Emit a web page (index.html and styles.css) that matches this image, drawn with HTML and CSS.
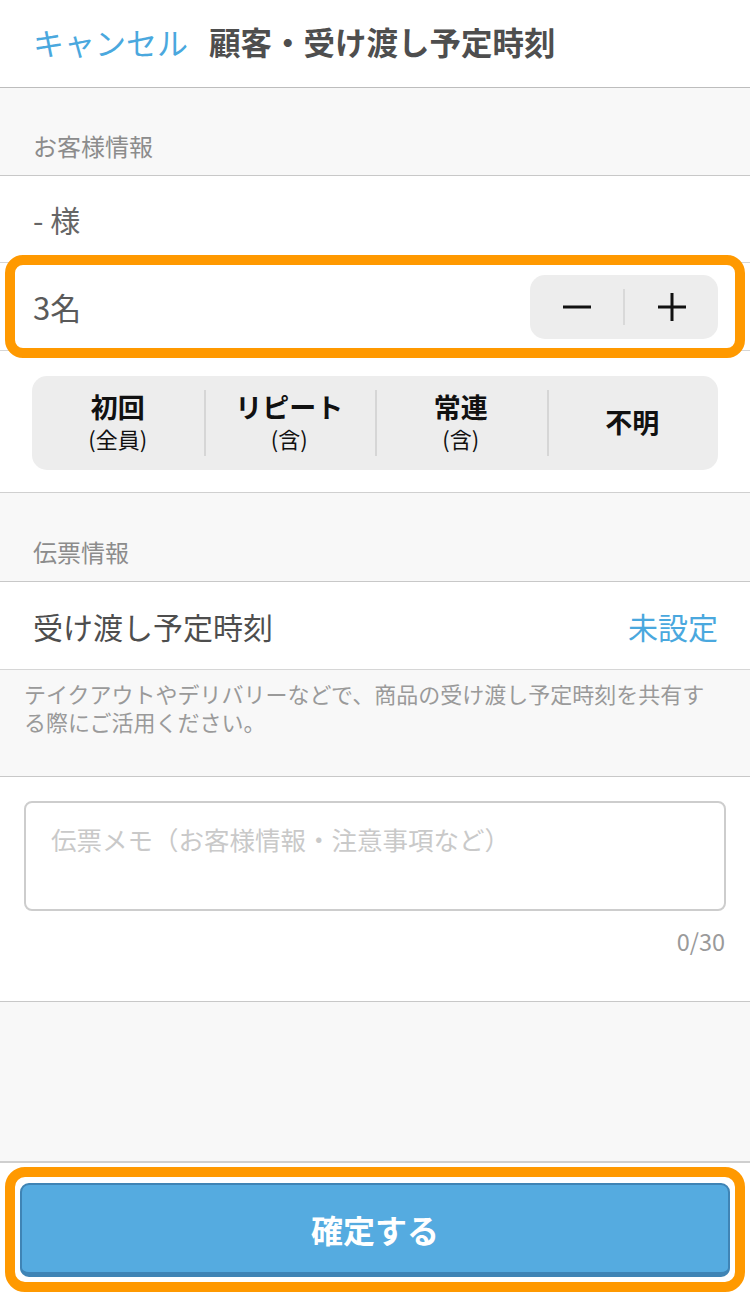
FILE: index.html
```html
<!DOCTYPE html>
<html lang="ja">
<head>
<meta charset="utf-8">
<link rel="stylesheet" href="styles.css">
</head>
<body>
<div class="page">
  <header class="topbar">
    <span class="cancel">キャンセル</span>
    <span class="title">顧客・受け渡し予定時刻</span>
  </header>

  <div class="sec-head"><span>お客様情報</span></div>

  <div class="row row-name"><span class="name">- 様</span></div>

  <div class="row count-row">
    <span class="count">3名</span>
    <div class="stepper">
      <div class="step-btn">
        <svg width="30" height="30" viewBox="0 0 30 30"><path d="M1 15H29" stroke="#111" stroke-width="3"/></svg>
      </div>
      <div class="step-div"></div>
      <div class="step-btn">
        <svg width="30" height="30" viewBox="0 0 30 30"><path d="M1 15H29M15 1V29" stroke="#111" stroke-width="3"/></svg>
      </div>
    </div>
    <div class="hl hl-count"></div>
  </div>

  <div class="seg-wrap">
    <div class="seg">
      <div class="seg-item"><span class="seg-main">初回</span><span class="seg-sub">(全員)</span></div>
      <div class="seg-item"><span class="seg-main">リピート</span><span class="seg-sub">(含)</span></div>
      <div class="seg-item"><span class="seg-main">常連</span><span class="seg-sub">(含)</span></div>
      <div class="seg-item"><span class="seg-main">不明</span></div>
    </div>
  </div>

  <div class="sec-head sec-head-2"><span>伝票情報</span></div>

  <div class="row pickup-row">
    <span class="pickup">受け渡し予定時刻</span>
    <span class="unset">未設定</span>
  </div>

  <div class="note">テイクアウトやデリバリーなどで、商品の受け渡し予定時刻を共有する際にご活用ください。</div>

  <div class="memo">
    <div class="memo-box"><span class="placeholder">伝票メモ（お客様情報・注意事項など）</span></div>
    <div class="counter">0/30</div>
  </div>

  <div class="filler"></div>

  <footer class="footer">
    <button class="confirm">確定する</button>
    <div class="hl hl-footer"></div>
  </footer>
</div>
</body>
</html>
```

FILE: styles.css
```css
* { box-sizing: border-box; }
html, body { margin: 0; padding: 0; }
body {
  background: #f8f8f8;
  font-family: "Noto Sans CJK JP", "Noto Sans", sans-serif;
  color: #555;
}
.page { width: 750px; position: relative; }

.topbar {
  height: 88px;
  background: #fff;
  border-bottom: 1px solid #bdbdbd;
  display: flex;
  align-items: center;
  padding: 0 0 5px 33px;
  gap: 21px;
}
.cancel { color: #4aa8de; font-size: 31px; }
.title { color: #4e4e4e; font-size: 31.5px; font-weight: 700; }

.sec-head {
  height: 88px;
  border-bottom: 1px solid #c8c8c8;
  display: flex;
  align-items: flex-end;
  padding: 0 0 12px 33px;
  font-size: 24px;
  color: #8c8c8c;
}
.sec-head-2 { height: 89px; }

.row {
  height: 88px;
  background: #fff;
  border-bottom: 1px solid #d6d6d6;
  display: flex;
  align-items: center;
  padding: 0 32px 0 33px;
  position: relative;
}
.row-name { height: 87px; }
.name { font-size: 30px; color: #666; }
.count-row { justify-content: space-between; }
.count { font-size: 31px; color: #5a5a5a; }

.stepper {
  width: 188px;
  height: 64px;
  background: #ededed;
  border-radius: 15px;
  display: flex;
  align-items: center;
  margin-top: 1px;
}
.step-btn {
  flex: 1;
  display: flex;
  justify-content: center;
  align-items: center;
}
.step-div { width: 2px; height: 36px; background: #d9d9d9; }

.hl {
  position: absolute;
  border: 10px solid #ff9900;
  border-radius: 18px;
  pointer-events: none;
}
.hl-count { left: 5px; right: 5px; top: -8px; bottom: -8px; }

.seg-wrap {
  background: #fff;
  padding: 25px 32px 22px 32px;
  border-bottom: 1px solid #d0d0d0;
}
.seg {
  height: 94px;
  background: #ededed;
  border-radius: 15px;
  display: flex;
}
.seg-item {
  flex: 1;
  display: flex;
  flex-direction: column;
  align-items: center;
  justify-content: center;
  padding-bottom: 4px;
  background: linear-gradient(#d6d6d6, #d6d6d6) left center / 2px 66px no-repeat;
  color: #111;
}
.seg-item:first-child { background: none; }
.seg-item:last-child { padding-bottom: 2px; }
.seg-main { font-size: 27px; font-weight: 700; line-height: 34px; }
.seg-sub { font-size: 22px; line-height: 28px; }

.pickup { font-size: 30px; color: #4e4e4e; flex: 1; }
.unset { font-size: 30px; color: #4aa8de; }

.note {
  height: 107px;
  border-bottom: 1px solid #c8c8c8;
  padding: 9px 28px 0 24px;
  font-size: 22px;
  line-height: 28px;
  color: #9a9a9a;
}

.memo {
  background: #fff;
  height: 225px;
  border-bottom: 1px solid #c8c8c8;
  padding: 24px 24px 0 24px;
}
.memo-box {
  height: 110px;
  border: 2px solid #cdcdcd;
  border-radius: 8px;
  padding: 17px 0 0 25px;
}
.placeholder { font-size: 25.5px; color: #c9c9c9; }
.counter {
  text-align: right;
  font-size: 23.5px;
  color: #9a9a9a;
  padding-top: 13px;
  padding-right: 1px;
}

.filler {
  height: 161px;
  border-bottom: 2px solid #cfcfcf;
}

.footer {
  background: #fff;
  height: 131px;
  padding: 20px 20px 0 20px;
  position: relative;
}
.confirm {
  display: block;
  width: 710px;
  height: 94px;
  background: #55abe0;
  border: 2px solid #3f84b5;
  border-bottom-width: 5px;
  border-radius: 9px;
  color: #fff;
  font-family: "Noto Sans CJK JP", sans-serif;
  font-size: 32px;
  font-weight: 700;
  padding: 0;
}
.hl-footer { left: 5px; right: 5px; top: 4px; height: 125px; border-radius: 20px; }
```
